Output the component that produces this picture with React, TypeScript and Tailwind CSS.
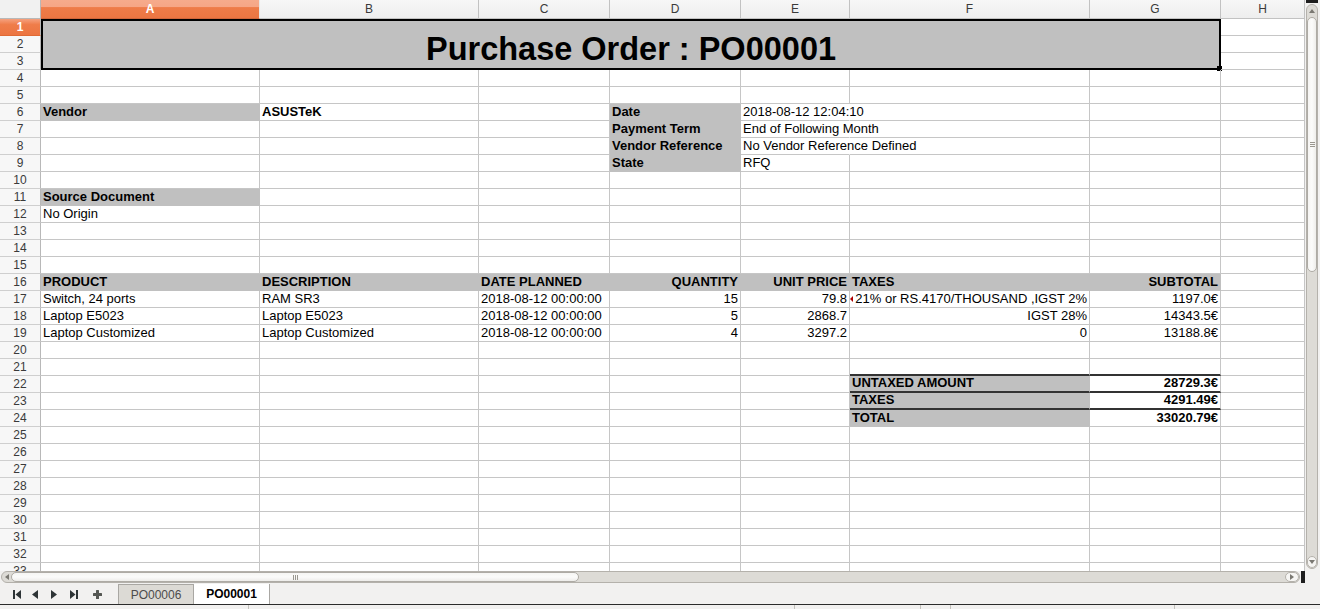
import React from 'react';

type C = { t?: string; b?: boolean; r?: boolean; f?: boolean; thick?: boolean; noR?: boolean; arrow?: boolean };

const COLS = ['A', 'B', 'C', 'D', 'E', 'F', 'G', 'H'];
const DATE = '2018-08-12 00:00:00';

const DATA: Record<number, Record<string, C>> = {
  6: { A: { t: 'Vendor', b: true, f: true }, B: { t: 'ASUSTeK', b: true }, D: { t: 'Date', b: true, f: true }, E: { t: '2018-08-12 12:04:10', noR: true } },
  7: { D: { t: 'Payment Term', b: true, f: true }, E: { t: 'End of Following Month', noR: true } },
  8: { D: { t: 'Vendor Reference', b: true, f: true }, E: { t: 'No Vendor Reference Defined', noR: true } },
  9: { D: { t: 'State', b: true, f: true }, E: { t: 'RFQ' } },
  11: { A: { t: 'Source Document', b: true, f: true } },
  12: { A: { t: 'No Origin' } },
  16: {
    A: { t: 'PRODUCT', b: true, f: true },
    B: { t: 'DESCRIPTION', b: true, f: true },
    C: { t: 'DATE PLANNED', b: true, f: true },
    D: { t: 'QUANTITY', b: true, f: true, r: true },
    E: { t: 'UNIT PRICE', b: true, f: true, r: true },
    F: { t: 'TAXES', b: true, f: true },
    G: { t: 'SUBTOTAL', b: true, f: true, r: true },
  },
  17: {
    A: { t: 'Switch, 24 ports' }, B: { t: 'RAM SR3' }, C: { t: DATE }, D: { t: '15', r: true }, E: { t: '79.8', r: true },
    F: { t: '21% or RS.4170/THOUSAND ,IGST 2%', r: true, arrow: true }, G: { t: '1197.0€', r: true },
  },
  18: {
    A: { t: 'Laptop E5023' }, B: { t: 'Laptop E5023' }, C: { t: DATE }, D: { t: '5', r: true }, E: { t: '2868.7', r: true },
    F: { t: 'IGST 28%', r: true }, G: { t: '14343.5€', r: true },
  },
  19: {
    A: { t: 'Laptop Customized' }, B: { t: 'Laptop Customized' }, C: { t: DATE }, D: { t: '4', r: true }, E: { t: '3297.2', r: true },
    F: { t: '0', r: true }, G: { t: '13188.8€', r: true },
  },
  21: { F: { thick: true }, G: { thick: true } },
  22: { F: { t: 'UNTAXED AMOUNT', b: true, f: true, thick: true }, G: { t: '28729.3€', b: true, r: true, thick: true } },
  23: { F: { t: 'TAXES', b: true, f: true, thick: true }, G: { t: '4291.49€', b: true, r: true, thick: true } },
  24: { F: { t: 'TOTAL', b: true, f: true }, G: { t: '33020.79€', b: true, r: true } },
};

function Cell({ c }: { c: C }) {
  const cls = [
    'relative box-border border-r border-b px-[2px] flex items-end whitespace-nowrap text-[13px] leading-[16px] text-black',
    c.f ? 'bg-[#c0c0c0] border-r-[#c0c0c0]' : c.noR ? 'border-r-transparent' : 'border-r-[#c6c6c6]',
    c.thick ? 'border-b-2 border-b-[#333333]' : c.f ? 'border-b-[#c0c0c0]' : 'border-b-[#c6c6c6]',
    c.r ? 'justify-end' : 'justify-start',
    c.b ? 'font-bold' : 'font-normal',
  ].join(' ');
  return (
    <div className={cls}>
      {c.arrow && (
        <svg className="absolute left-[0px] top-[5px]" width="3" height="6" viewBox="0 0 3 6">
          <polygon points="3,0 0,3 3,6" fill="#b00000" />
        </svg>
      )}
      {c.t && <span>{c.t}</span>}
    </div>
  );
}

function RowHead({ n }: { n: number }) {
  if (n === 1) {
    return (
      <div className="box-border border-r border-b border-r-[#b8b8b8] border-b-[#e06a35] bg-[linear-gradient(to_bottom,#f5a17f_0%,#ef7d4a_35%,#ec7541_100%)] flex items-center justify-center text-[12px] font-bold text-white">
        {n}
      </div>
    );
  }
  return (
    <div className="box-border border-r border-b border-r-[#b8b8b8] border-b-[#cfcfcf] bg-[#f7f7f7] flex items-center justify-center text-[12px] text-[#3a3a3a]">
      {n}
    </div>
  );
}

function Sheet() {
  const items: React.ReactNode[] = [];
  items.push(<div key="corner" className="box-border border-r border-b border-[#b8b8b8] bg-[#f1f1f1]" />);
  COLS.forEach((l) => {
    if (l === 'A') {
      items.push(
        <div key="hA" className="box-border border-r border-b border-r-[#e8e8e8] border-b-[#d0663a] bg-[linear-gradient(to_bottom,#f6ab8c_0%,#f6a686_38%,#ee7c49_42%,#ec7642_100%)] flex items-center justify-center text-[12px] font-bold text-white">
          {l}
        </div>
      );
    } else {
      items.push(
        <div key={'h' + l} className="box-border border-r border-b border-[#c2c2c2] bg-[linear-gradient(to_bottom,#f7f7f7,#eeeeee)] flex items-center justify-center text-[12px] text-[#3a3a3a]">
          {l}
        </div>
      );
    }
  });

  for (let r = 1; r <= 33; r++) {
    items.push(<RowHead key={'r' + r} n={r} />);
    if (r === 1) {
      items.push(
        <div key="title" className="col-span-7 row-span-3 relative box-border border-2 border-black bg-[#c0c0c0] flex items-end justify-center">
          <span className="text-[32.5px] leading-[1.15] font-bold text-black">Purchase Order : PO00001</span>
          <div className="absolute -right-[3px] -bottom-[3px] w-[5px] h-[5px] bg-black" />
        </div>
      );
      items.push(<Cell key="H1" c={{}} />);
      continue;
    }
    if (r === 2 || r === 3) {
      items.push(<Cell key={'H' + r} c={{}} />);
      continue;
    }
    const row = DATA[r] || {};
    COLS.forEach((l) => {
      items.push(<Cell key={l + r} c={row[l] || {}} />);
    });
  }

  return (
    <div className="w-[1305px] h-[571px] overflow-hidden bg-white">
      <div className="grid grid-cols-[41px_219px_219px_131px_131px_109px_240px_131px_84px] grid-rows-[19px] auto-rows-[17px]">
        {items}
      </div>
    </div>
  );
}

function VScroll() {
  return (
    <div className="w-[15px] h-[571px] bg-[#f2f1f0] flex flex-col items-start pl-[1px]">
      <div className="w-[12px] h-[3px] bg-[#1e1e1e]" />
      <div className="mt-[1px] w-[12px] h-[565px] rounded-[6px] border border-[#b4b1ab] bg-[#dddbd6] flex flex-col items-center overflow-hidden">
        <div className="h-[12px] w-full flex items-center justify-center">
          <svg width="6" height="4" viewBox="0 0 6 4"><polygon points="0,4 3,0 6,4" fill="#7a7872" /></svg>
        </div>
        <div className="w-full h-[255px] rounded-[6px] border border-[#aeaba5] bg-[linear-gradient(to_right,#f6f5f3,#fbfbfa,#eeedea)] flex items-center justify-center">
          <div className="flex flex-col gap-[1px]">
            <div className="w-[5px] h-[1px] bg-[#9a978f]" />
            <div className="w-[5px] h-[1px] bg-[#9a978f]" />
            <div className="w-[5px] h-[1px] bg-[#9a978f]" />
          </div>
        </div>
        <div className="flex-1" />
        <div className="h-[12px] w-full rounded-[6px] border border-[#b4b1ab] bg-[#f6f5f3] flex items-center justify-center">
          <svg width="6" height="4" viewBox="0 0 6 4"><polygon points="0,0 6,0 3,4" fill="#7a7872" /></svg>
        </div>
      </div>
    </div>
  );
}

function HScroll() {
  return (
    <div className="h-[13px] w-[1320px] bg-[#f2f1f0] flex items-stretch">
      <div className="ml-[1px] w-[1299px] h-[12px] rounded-[6px] border border-[#b4b1ab] bg-[#dddbd6] flex items-center overflow-hidden">
        <div className="w-[9px] h-full flex items-center justify-center">
          <svg width="4" height="6" viewBox="0 0 4 6"><polygon points="4,0 0,3 4,6" fill="#7a7872" /></svg>
        </div>
        <div className="w-[568px] h-full rounded-[6px] border border-[#aeaba5] bg-[linear-gradient(to_bottom,#f6f5f3,#fbfbfa,#eeedea)] flex items-center justify-center">
          <div className="flex gap-[1px]">
            <div className="w-[1px] h-[5px] bg-[#9a978f]" />
            <div className="w-[1px] h-[5px] bg-[#9a978f]" />
            <div className="w-[1px] h-[5px] bg-[#9a978f]" />
          </div>
        </div>
        <div className="flex-1" />
        <div className="w-[14px] h-full rounded-[6px] border border-[#b4b1ab] bg-[#f6f5f3] flex items-center justify-center">
          <svg width="4" height="6" viewBox="0 0 4 6"><polygon points="0,0 4,3 0,6" fill="#7a7872" /></svg>
        </div>
      </div>
      <div className="ml-[1px] w-[4px] h-[12px] bg-[#1e1e1e]" />
    </div>
  );
}

function TabBar() {
  return (
    <div className="h-[20px] w-[1320px] bg-[#f2f1f0] flex items-stretch">
      <div className="w-[118px] flex items-center">
        <svg className="ml-[13px]" width="8" height="9" viewBox="0 0 8 9">
          <rect x="0" y="0" width="2" height="9" fill="#2e3436" />
          <polygon points="8,0 2.5,4.5 8,9" fill="#2e3436" />
        </svg>
        <svg className="ml-[11px]" width="6" height="9" viewBox="0 0 6 9">
          <polygon points="6,0 0,4.5 6,9" fill="#2e3436" />
        </svg>
        <svg className="ml-[13px]" width="6" height="9" viewBox="0 0 6 9">
          <polygon points="0,0 6,4.5 0,9" fill="#2e3436" />
        </svg>
        <svg className="ml-[13px]" width="8" height="9" viewBox="0 0 8 9">
          <polygon points="0,0 5.5,4.5 0,9" fill="#2e3436" />
          <rect x="6" y="0" width="2" height="9" fill="#2e3436" />
        </svg>
        <svg className="ml-[15px]" width="9" height="9" viewBox="0 0 9 9">
          <rect x="3" y="0" width="3" height="9" rx="0.5" fill="#555753" />
          <rect x="0" y="3" width="9" height="3" rx="0.5" fill="#555753" />
        </svg>
      </div>
      <div className="w-[76px] box-border border-l border-r border-t border-[#a9a7a3] bg-[#dcdad5] flex items-center justify-center text-[12px] text-[#4c4c4c]">
        PO00006
      </div>
      <div className="w-[76px] box-border border-r border-[#a9a7a3] bg-white flex items-center justify-center text-[12px] font-bold text-black">
        PO00001
      </div>
      <div className="flex-1" />
    </div>
  );
}

export default function App() {
  return (
    <div className="w-[1320px] h-[609px] overflow-hidden bg-[#f2f1f0] flex flex-col font-['Liberation_Sans',Arial,sans-serif]">
      <div className="flex h-[571px]">
        <Sheet />
        <VScroll />
      </div>
      <HScroll />
      <TabBar />
      <div className="h-[1px] bg-[#2b2b2b]" />
      <div className="h-[4px] flex bg-[#f2f1f0]">
        <div className="ml-[248px] w-[1px] bg-[#c4c2bd]" />
        <div className="ml-[545px] w-[1px] bg-[#c4c2bd]" />
        <div className="ml-[125px] w-[1px] bg-[#c4c2bd]" />
        <div className="ml-[29px] w-[1px] bg-[#c4c2bd]" />
        <div className="ml-[223px] w-[1px] bg-[#c4c2bd]" />
      </div>
    </div>
  );
}
